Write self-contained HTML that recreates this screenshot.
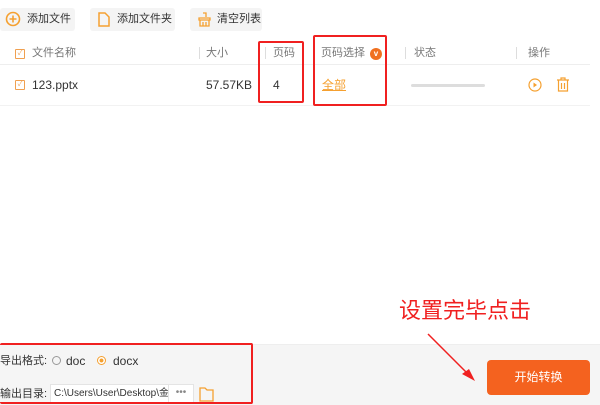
<!DOCTYPE html>
<html><head><meta charset="utf-8"><style>
body{margin:0;width:600px;height:404px;position:relative;background:#fff;font-family:"Liberation Sans","Noto Sans CJK SC",sans-serif;overflow:hidden;color:#333}
.a{position:absolute;white-space:nowrap;line-height:1}
.btn{position:absolute;top:8px;height:23px;background:#f4f4f4;border-radius:3px;font-size:11px;color:#333}
.btn span.t{top:6px}
.h{font-size:11px;color:#777;top:48px}
.sep{position:absolute;top:47px;width:1px;height:12px;background:#ddd}
.rb{position:absolute;border:2px solid #f02020;border-radius:2px}
.cb{position:absolute;width:8px;height:8px;border:1px solid #f0a050;border-radius:1px;font-size:7px;color:#f0a050;line-height:8px;text-align:center}
</style></head><body>
<div class="btn" style="left:0;width:75px"><svg class="a" style="left:5px;top:3px" width="16" height="16"><circle cx="8" cy="8" r="6.5" fill="none" stroke="#f5a030" stroke-width="1.6"/><path d="M8 4.5v7M4.5 8h7" stroke="#f5a030" stroke-width="1.6"/></svg><span class="a t" style="left:27px">添加文件</span></div>
<div class="btn" style="left:90px;width:85px"><svg class="a" style="left:7px;top:4px" width="14" height="15"><path d="M2 1h6l4 4v9H2z" fill="none" stroke="#f5a030" stroke-width="1.5"/></svg><span class="a t" style="left:27px">添加文件夹</span></div>
<div class="btn" style="left:190px;width:72px"><svg class="a" style="left:7px;top:4px" width="15" height="15"><path d="M6 1h3v4M2 6h11v2H2zM3 8v6h9V8M6 10v4M9 10v4" fill="none" stroke="#f5a030" stroke-width="1.3"/></svg><span class="a t" style="left:27px">清空列表</span></div>
<div class="cb" style="left:15px;top:49px">✓</div>
<div class="a h" style="left:32px">文件名称</div>
<div class="sep" style="left:199px"></div><div class="a h" style="left:206px">大小</div>
<div class="sep" style="left:265px"></div><div class="a h" style="left:273px">页码</div>
<div class="a h" style="left:321px">页码选择</div>
<div class="a" style="left:370px;top:48px;width:12px;height:12px;border-radius:50%;background:#f07020;color:#fff;font-size:8px;line-height:12px;text-align:center;font-weight:bold">v</div>
<div class="sep" style="left:405px"></div><div class="a h" style="left:414px">状态</div>
<div class="sep" style="left:516px"></div><div class="a h" style="left:528px">操作</div>
<div class="a" style="left:0;top:64px;width:590px;height:1px;background:#eee"></div>
<div class="a" style="left:0;top:105px;width:590px;height:1px;background:#f2f2f2"></div>
<div class="cb" style="left:15px;top:80px">✓</div>
<div class="a" style="left:32px;top:79px;font-size:12px">123.pptx</div>
<div class="a" style="left:206px;top:79px;font-size:12px">57.57KB</div>
<div class="a" style="left:273px;top:79px;font-size:12px">4</div>
<div class="a" style="left:322px;top:79px;font-size:12px;color:#f5a030;text-decoration:underline">全部</div>
<div class="a" style="left:411px;top:84px;width:74px;height:3px;background:#ddd;border-radius:2px"></div>
<svg class="a" style="left:528px;top:78px" width="14" height="14"><circle cx="7" cy="7" r="6" fill="none" stroke="#f5a030" stroke-width="1.2"/><path d="M5.5 4.5l3.5 2.5-3.5 2.5z" fill="#f5a030"/></svg>
<svg class="a" style="left:556px;top:77px" width="14" height="15"><path d="M1 3h12M5 3V1h4v2M2.5 3v11h9V3M5.5 6v6M8.5 6v6" fill="none" stroke="#f5a030" stroke-width="1.2"/></svg>
<div class="rb" style="left:258px;top:41px;width:42px;height:58px"></div>
<div class="rb" style="left:313px;top:35px;width:70px;height:67px"></div>
<div class="a" style="left:0;top:344px;width:600px;height:60px;background:#f5f5f5;border-top:1px solid #eee"></div>
<div class="a" style="left:399px;top:300px;font-size:22px;color:#f02020">设置完毕点击</div>
<svg class="a" style="left:420px;top:330px" width="60" height="55"><path d="M8 4L50 46" stroke="#f02020" stroke-width="1.5"/><path d="M55 51L42 44L49 39z" fill="#f02020"/></svg>
<div class="a" style="left:0;top:356px;font-size:11px">导出格式:</div>
<div class="a" style="left:52px;top:356px;width:7px;height:7px;border:1px solid #999;border-radius:50%"></div>
<div class="a" style="left:66px;top:355px;font-size:12px">doc</div>
<div class="a" style="left:97px;top:356px;width:7px;height:7px;border:1px solid #f5a030;border-radius:50%;background:radial-gradient(#f5a030 35%,#fff 45%)"></div>
<div class="a" style="left:113px;top:355px;font-size:12px">docx</div>
<div class="a" style="left:0;top:389px;font-size:11px">输出目录:</div>
<div class="a" style="left:50px;top:384px;width:118px;height:18px;background:#fff;border:1px solid #e4e4e4;font-size:10px;line-height:18px;padding-left:3px;overflow:hidden">C:\Users\User\Desktop\金舟</div>
<div class="a" style="left:168px;top:384px;width:24px;height:18px;background:#fff;border:1px solid #e4e4e4;font-size:10px;line-height:16px;text-align:center;color:#888">•••</div>
<svg class="a" style="left:199px;top:386px" width="15" height="16"><path d="M1 2h5l2 2h6v11H1z" fill="none" stroke="#f5a030" stroke-width="1.3"/></svg>
<div class="rb" style="left:0;top:343px;width:251px;height:57px;border-left:none"></div>
<div class="a" style="left:487px;top:360px;width:103px;height:35px;background:#f4621f;border-radius:4px;color:#fff;font-size:12px;line-height:35px;text-align:center">开始转换</div>
</body></html>
